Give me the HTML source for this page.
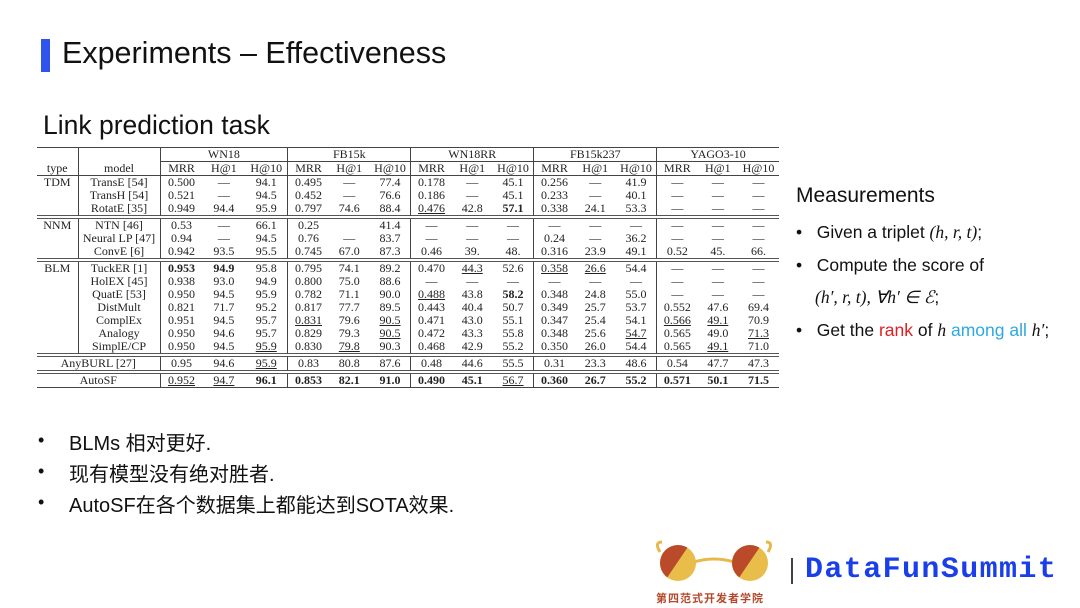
<!DOCTYPE html>
<html><head><meta charset="utf-8"><style>
body{margin:0;width:1080px;height:608px;background:#fff;position:relative;overflow:hidden;font-family:"Liberation Sans","Noto Sans CJK SC",sans-serif;color:#111}
.a{position:absolute;white-space:nowrap}
table{position:absolute;left:37px;top:147px;border-collapse:collapse;font-family:"Liberation Serif",serif;font-size:12px;color:#222;border-top:1px solid #444;border-bottom:1px solid #444}
td{padding:0;text-align:center;height:13px;line-height:13px}
.v{border-left:1px solid #444}
.dl td{height:2px;border-top:1px solid #555;border-bottom:1px solid #555;padding:0}
b{font-weight:bold}
u{text-decoration:underline}
.bl{position:absolute;left:69px;font-size:20px;white-space:nowrap}
.dot{position:absolute;left:38px;font-size:18px}
.rb{position:absolute;left:796px;font-size:17.5px;white-space:nowrap}
</style></head><body>
<div class="a" style="left:41px;top:39px;width:9px;height:33px;background:#2f54eb"></div>
<div class="a" style="left:62px;top:36px;font-size:30.5px">Experiments – Effectiveness</div>
<div class="a" style="left:43px;top:110px;font-size:26.5px">Link prediction task</div>

<table>
<colgroup><col style="width:41px"><col style="width:82px"><col span="3" style="width:42.6px"><col span="3" style="width:41px"><col span="3" style="width:41px"><col span="3" style="width:41px"><col span="3" style="width:40.7px"></colgroup>
<tr style="height:14px"><td></td><td class="v"></td><td colspan="3" class="v" style="border-bottom:1px solid #444">WN18</td><td colspan="3" class="v" style="border-bottom:1px solid #444">FB15k</td><td colspan="3" class="v" style="border-bottom:1px solid #444">WN18RR</td><td colspan="3" class="v" style="border-bottom:1px solid #444">FB15k237</td><td colspan="3" class="v" style="border-bottom:1px solid #444">YAGO3-10</td></tr>
<tr style="border-bottom:1px solid #444"><td>type</td><td class="v">model</td><td class="v">MRR</td><td>H@1</td><td>H@10</td><td class="v">MRR</td><td>H@1</td><td>H@10</td><td class="v">MRR</td><td>H@1</td><td>H@10</td><td class="v">MRR</td><td>H@1</td><td>H@10</td><td class="v">MRR</td><td>H@1</td><td>H@10</td></tr>
<tr><td>TDM</td><td class="v">TransE [54]</td><td class="v">0.500</td><td>—</td><td>94.1</td><td class="v">0.495</td><td>—</td><td>77.4</td><td class="v">0.178</td><td>—</td><td>45.1</td><td class="v">0.256</td><td>—</td><td>41.9</td><td class="v">—</td><td>—</td><td>—</td></tr>
<tr><td></td><td class="v">TransH [54]</td><td class="v">0.521</td><td>—</td><td>94.5</td><td class="v">0.452</td><td>—</td><td>76.6</td><td class="v">0.186</td><td>—</td><td>45.1</td><td class="v">0.233</td><td>—</td><td>40.1</td><td class="v">—</td><td>—</td><td>—</td></tr>
<tr><td></td><td class="v">RotatE [35]</td><td class="v">0.949</td><td>94.4</td><td>95.9</td><td class="v">0.797</td><td>74.6</td><td>88.4</td><td class="v"><u>0.476</u></td><td>42.8</td><td><b>57.1</b></td><td class="v">0.338</td><td>24.1</td><td>53.3</td><td class="v">—</td><td>—</td><td>—</td></tr>
<tr class="dl"><td colspan="17"></td></tr>
<tr><td>NNM</td><td class="v">NTN [46]</td><td class="v">0.53</td><td>—</td><td>66.1</td><td class="v">0.25</td><td></td><td>41.4</td><td class="v">—</td><td>—</td><td>—</td><td class="v">—</td><td>—</td><td>—</td><td class="v">—</td><td>—</td><td>—</td></tr>
<tr><td></td><td class="v">Neural LP [47]</td><td class="v">0.94</td><td>—</td><td>94.5</td><td class="v">0.76</td><td>—</td><td>83.7</td><td class="v">—</td><td>—</td><td>—</td><td class="v">0.24</td><td>—</td><td>36.2</td><td class="v">—</td><td>—</td><td>—</td></tr>
<tr><td></td><td class="v">ConvE [6]</td><td class="v">0.942</td><td>93.5</td><td>95.5</td><td class="v">0.745</td><td>67.0</td><td>87.3</td><td class="v">0.46</td><td>39.</td><td>48.</td><td class="v">0.316</td><td>23.9</td><td>49.1</td><td class="v">0.52</td><td>45.</td><td>66.</td></tr>
<tr class="dl"><td colspan="17"></td></tr>
<tr><td>BLM</td><td class="v">TuckER [1]</td><td class="v"><b>0.953</b></td><td><b>94.9</b></td><td>95.8</td><td class="v">0.795</td><td>74.1</td><td>89.2</td><td class="v">0.470</td><td><u>44.3</u></td><td>52.6</td><td class="v"><u>0.358</u></td><td><u>26.6</u></td><td>54.4</td><td class="v">—</td><td>—</td><td>—</td></tr>
<tr><td></td><td class="v">HolEX [45]</td><td class="v">0.938</td><td>93.0</td><td>94.9</td><td class="v">0.800</td><td>75.0</td><td>88.6</td><td class="v">—</td><td>—</td><td>—</td><td class="v">—</td><td>—</td><td>—</td><td class="v">—</td><td>—</td><td>—</td></tr>
<tr><td></td><td class="v">QuatE [53]</td><td class="v">0.950</td><td>94.5</td><td>95.9</td><td class="v">0.782</td><td>71.1</td><td>90.0</td><td class="v"><u>0.488</u></td><td>43.8</td><td><b>58.2</b></td><td class="v">0.348</td><td>24.8</td><td>55.0</td><td class="v">—</td><td>—</td><td>—</td></tr>
<tr><td></td><td class="v">DistMult</td><td class="v">0.821</td><td>71.7</td><td>95.2</td><td class="v">0.817</td><td>77.7</td><td>89.5</td><td class="v">0.443</td><td>40.4</td><td>50.7</td><td class="v">0.349</td><td>25.7</td><td>53.7</td><td class="v">0.552</td><td>47.6</td><td>69.4</td></tr>
<tr><td></td><td class="v">ComplEx</td><td class="v">0.951</td><td>94.5</td><td>95.7</td><td class="v"><u>0.831</u></td><td>79.6</td><td><u>90.5</u></td><td class="v">0.471</td><td>43.0</td><td>55.1</td><td class="v">0.347</td><td>25.4</td><td>54.1</td><td class="v"><u>0.566</u></td><td><u>49.1</u></td><td>70.9</td></tr>
<tr><td></td><td class="v">Analogy</td><td class="v">0.950</td><td>94.6</td><td>95.7</td><td class="v">0.829</td><td>79.3</td><td><u>90.5</u></td><td class="v">0.472</td><td>43.3</td><td>55.8</td><td class="v">0.348</td><td>25.6</td><td><u>54.7</u></td><td class="v">0.565</td><td>49.0</td><td><u>71.3</u></td></tr>
<tr><td></td><td class="v">SimplE/CP</td><td class="v">0.950</td><td>94.5</td><td><u>95.9</u></td><td class="v">0.830</td><td><u>79.8</u></td><td>90.3</td><td class="v">0.468</td><td>42.9</td><td>55.2</td><td class="v">0.350</td><td>26.0</td><td>54.4</td><td class="v">0.565</td><td><u>49.1</u></td><td>71.0</td></tr>
<tr class="dl"><td colspan="17"></td></tr>
<tr><td colspan="2">AnyBURL [27]</td><td class="v">0.95</td><td>94.6</td><td><u>95.9</u></td><td class="v">0.83</td><td>80.8</td><td>87.6</td><td class="v">0.48</td><td>44.6</td><td>55.5</td><td class="v">0.31</td><td>23.3</td><td>48.6</td><td class="v">0.54</td><td>47.7</td><td>47.3</td></tr>
<tr class="dl"><td colspan="17"></td></tr>
<tr><td colspan="2">AutoSF</td><td class="v"><u>0.952</u></td><td><u>94.7</u></td><td><b>96.1</b></td><td class="v"><b>0.853</b></td><td><b>82.1</b></td><td><b>91.0</b></td><td class="v"><b>0.490</b></td><td><b>45.1</b></td><td><u>56.7</u></td><td class="v"><b>0.360</b></td><td><b>26.7</b></td><td><b>55.2</b></td><td class="v"><b>0.571</b></td><td><b>50.1</b></td><td><b>71.5</b></td></tr>
</table>

<div class="a" style="left:796px;top:184px;font-size:21px">Measurements</div>
<div class="rb" style="top:222px">•&nbsp;&nbsp; Given a triplet <i style="font-family:'Liberation Serif',serif">(h, r, t)</i>;</div>
<div class="rb" style="top:255px">•&nbsp;&nbsp; Compute the score of</div>
<div class="rb" style="top:287px;left:815px"><i style="font-family:'Liberation Serif',serif">(h′, r, t), ∀h′ ∈ ℰ</i>;</div>
<div class="rb" style="top:320px">•&nbsp;&nbsp; Get the <span style="color:#e02020">rank</span> of <i style="font-family:'Liberation Serif',serif">h</i> <span style="color:#2ea8e0">among all</span> <i style="font-family:'Liberation Serif',serif">h′</i>;</div>

<div class="dot" style="top:430px">•</div><div class="bl" style="top:427px">BLMs 相对更好.</div>
<div class="dot" style="top:461px">•</div><div class="bl" style="top:458px">现有模型没有绝对胜者.</div>
<div class="dot" style="top:492px">•</div><div class="bl" style="top:489px">AutoSF在各个数据集上都能达到SOTA效果.</div>

<svg class="a" style="left:650px;top:538px" width="130" height="48" viewBox="0 0 130 48">
<path d="M10 14 Q4 4 12 4" stroke="#e9b84a" stroke-width="3" fill="none"/>
<path d="M118 14 Q124 4 116 4" stroke="#e9b84a" stroke-width="3" fill="none"/>
<path d="M44 24 Q64 18 84 24" stroke="#e9b84a" stroke-width="3" fill="none"/>
<defs><clipPath id="c1"><circle cx="28" cy="25" r="18"/></clipPath><clipPath id="c2"><circle cx="100" cy="25" r="18"/></clipPath></defs>
<g clip-path="url(#c1)"><rect x="0" y="0" width="60" height="50" fill="#e9bd4a"/><polygon points="0,0 44,0 10,50 0,50" fill="#bb4a2a"/></g>
<g clip-path="url(#c2)"><rect x="70" y="0" width="60" height="50" fill="#e9bd4a"/><polygon points="70,0 116,0 82,50 70,50" fill="#bb4a2a"/></g>
</svg>
<div class="a" style="left:656px;top:590px;font-size:11px;font-weight:bold;color:#b5482a;letter-spacing:1px">第四范式开发者学院</div>
<div class="a" style="left:791px;top:558px;width:2px;height:26px;background:#444"></div>
<div class="a" style="left:805px;top:553px;font-family:'Liberation Mono',monospace;font-weight:bold;font-size:30px;letter-spacing:1.4px;color:#1a3fe8">DataFunSummit</div>
</body></html>
